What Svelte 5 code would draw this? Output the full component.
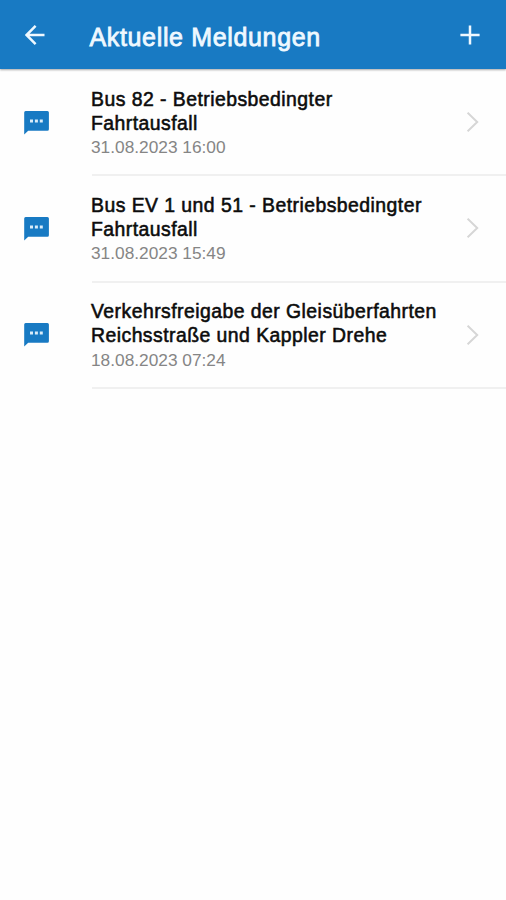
<script lang="ts">
	type Message = {
		id: number;
		title: string;
		date: string;
	};

	const messages: Message[] = [
		{ id: 1, title: 'Bus 82 - Betriebsbedingter Fahrtausfall', date: '31.08.2023 16:00' },
		{ id: 2, title: 'Bus EV 1 und 51 - Betriebsbedingter Fahrtausfall', date: '31.08.2023 15:49' },
		{
			id: 3,
			title: 'Verkehrsfreigabe der Gleisüberfahrten Reichsstraße und Kappler Drehe',
			date: '18.08.2023 07:24'
		}
	];
</script>

<div class="screen">
	<header class="app-bar">
		<button class="back" aria-label="Zurück">
			<svg width="20" height="20" viewBox="0 0 20 20">
				<path d="M19.5 10H1.8M10.6 .9L1.5 10l9.1 9.1" />
			</svg>
		</button>
		<h1>Aktuelle Meldungen</h1>
		<button class="add" aria-label="Hinzufügen">
			<svg width="20" height="20" viewBox="0 0 20 20">
				<path d="M10 .4v19.2M.4 10h19.2" />
			</svg>
		</button>
	</header>

	<ul class="messages">
		{#each messages as message (message.id)}
			<li class="message">
				<svg class="bubble" width="26" height="24" viewBox="0 0 26 24">
					<path
						d="M1.6 0h21.8a1.5 1.5 0 0 1 1.5 1.5v16.8a1.5 1.5 0 0 1-1.5 1.5H4.2L.2 23.4V1.5A1.5 1.5 0 0 1 1.6 0z"
						fill="#187ac3"
					/>
					<path d="M6 8.6h3v2.8H6zM10.9 8.6h3v2.8h-3zM15.8 8.6h3v2.8h-3z" fill="#d9ecf9" />
				</svg>
				<div class="content">
					<div class="text">
						<h2>{message.title}</h2>
						<p>{message.date}</p>
					</div>
					<svg class="chevron" width="12" height="20" viewBox="0 0 12 20">
						<path d="M.6 .7l9.6 9.3-9.6 9.3" />
					</svg>
				</div>
			</li>
		{/each}
	</ul>
</div>

<style>
	:global(body) {
		margin: 0;
		background: #fefefe;
	}

	.screen {
		height: 900px;
		overflow: hidden;
		background: #fefefe;
		font-family: 'Liberation Sans', Arial, sans-serif;
	}

	.app-bar {
		display: flex;
		align-items: center;
		box-sizing: border-box;
		height: 69px;
		padding: 1px 26px 0 25px;
		background: #187ac3;
		box-shadow: 0 1px 2px rgba(0, 0, 0, 0.35);
		color: #fff;
	}

	button {
		display: flex;
		padding: 0;
		border: 0;
		background: none;
		color: inherit;
	}

	button path {
		fill: none;
		stroke: #eef8ff;
		stroke-width: 2.5;
	}

	.add {
		margin-left: auto;
	}

	h1 {
		margin: 4px 0 0 44.5px;
		color: #eef8ff;
		font-size: 25px;
		font-weight: 400;
		line-height: 30px;
		letter-spacing: 0.65px;
		white-space: nowrap;
		-webkit-text-stroke: 0.8px currentColor;
	}

	.messages {
		margin: 0;
		padding: 1px 0 0;
		list-style: none;
	}

	.message {
		display: flex;
		box-sizing: border-box;
		height: 106.4px;
		padding-left: 24px;
	}

	.bubble {
		flex: none;
		margin-top: 40.5px;
	}

	.content {
		display: flex;
		flex: 1;
		justify-content: space-between;
		margin-left: 42px;
		padding-right: 27px;
		border-bottom: 2px solid #f0f0f0;
	}

	.text {
		width: 350px;
		margin-left: -1px;
		padding-top: 16.5px;
	}

	h2 {
		margin: 0;
		color: #0c0c0c;
		font-size: 19.4px;
		font-weight: 400;
		line-height: 24px;
		letter-spacing: 0.46px;
		-webkit-text-stroke: 0.55px currentColor;
	}

	p {
		margin: 0.5px 0 0;
		color: #858585;
		font-size: 17.3px;
		line-height: 24px;
	}

	.chevron {
		flex: none;
		margin-top: 42px;
	}

	.chevron path {
		fill: none;
		stroke: #d6d6d6;
		stroke-width: 2;
	}
</style>
